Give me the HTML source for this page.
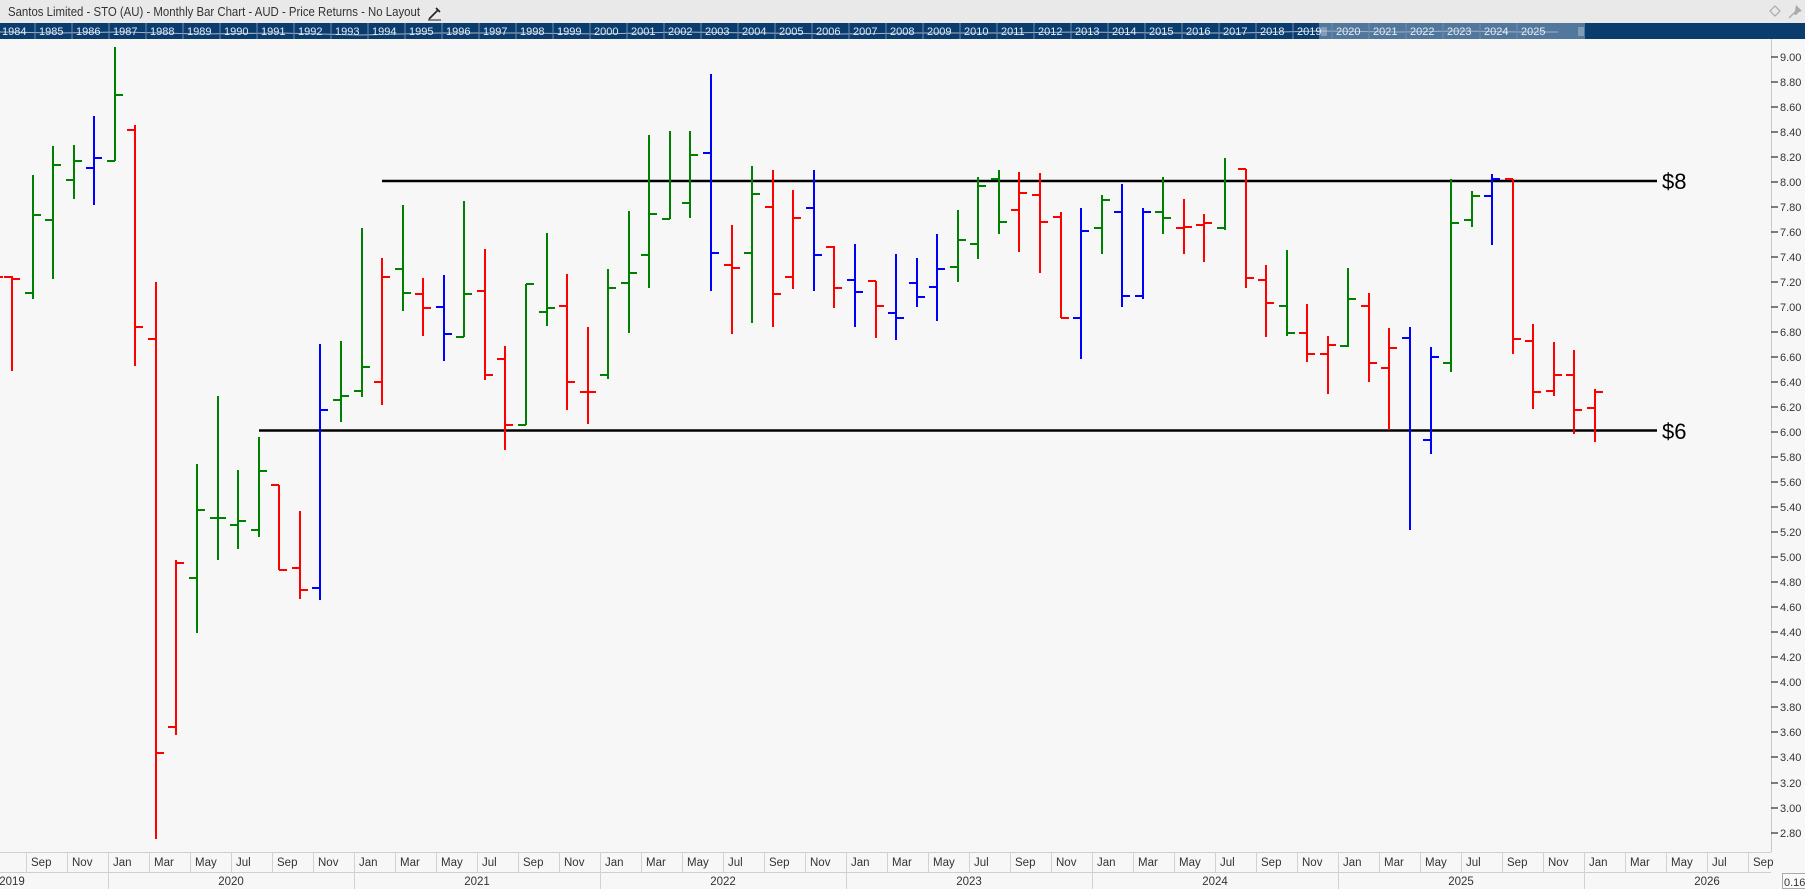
<!DOCTYPE html>
<html><head><meta charset="utf-8"><style>
html,body{margin:0;padding:0;background:#f7f7f7;overflow:hidden}
svg{display:block;font-family:"Liberation Sans",sans-serif}
</style></head><body>
<svg width="1805" height="889" viewBox="0 0 1805 889" xmlns="http://www.w3.org/2000/svg">
<rect x="0" y="0" width="1805" height="889" fill="#f7f7f7"/>
<rect x="0" y="0" width="1805" height="23" fill="#e9e9e9"/>
<text x="8" y="16" font-size="12.5" fill="#333" textLength="412" lengthAdjust="spacingAndGlyphs">Santos Limited - STO (AU) - Monthly Bar Chart - AUD - Price Returns - No Layout</text>
<g stroke="#222" stroke-width="1.6" fill="none"><path d="M430 18 L438 10 M436 8 L440 12 M429 19 L431 17"/><path d="M428 20 H441" stroke-width="1"/></g>
<path d="M1775 6 L1780 11 L1775 16 L1770 11 Z" fill="none" stroke="#aaa" stroke-width="1.2"/>
<g fill="#aaa"><path d="M1796 5 L1802 11 L1799 12 L1796 15 L1793 14 L1795 11 Z"/><path d="M1794 13 L1789 18" stroke="#aaa" stroke-width="1.3"/></g>
<rect x="0" y="23" width="1805" height="16" fill="#0b3c6e"/>
<rect x="1319" y="23" width="266" height="16" fill="#52779c"/>
<polyline points="0,32 60,33 120,32 200,34 280,33 360,35 440,33 520,33 600,34 680,32 760,33 840,34 920,33 1000,33 1080,32 1160,33 1240,33 1320,31 1400,32 1460,31 1520,32 1558,32" fill="none" stroke="#9fb3c8" stroke-width="1"/>
<g stroke="#3f6690" stroke-width="1">
<path d="M35 23V39M72 23V39M109 23V39M146 23V39M183 23V39M220 23V39M257 23V39M294 23V39M331 23V39M368 23V39M405 23V39M442 23V39M479 23V39M516 23V39M553 23V39M590 23V39M627 23V39M664 23V39M701 23V39M738 23V39M775 23V39M812 23V39M849 23V39M886 23V39M923 23V39M960 23V39M997 23V39M1034 23V39M1071 23V39M1108 23V39M1145 23V39M1182 23V39M1219 23V39M1256 23V39M1293 23V39M1332 23V39M1369 23V39M1406 23V39M1443 23V39M1480 23V39M1517 23V39" stroke="#6d8cb0"/>
</g>
<path d="M1322 27V36M1324 27V36M1326 27V36M1579 27V36M1581 27V36M1583 27V36" stroke="#c8d4e0" stroke-width="0.8"/>
<g font-size="11" fill="#e4ecf4">
<text x="2" y="35">1984</text><text x="39" y="35">1985</text><text x="76" y="35">1986</text><text x="113" y="35">1987</text><text x="150" y="35">1988</text><text x="187" y="35">1989</text><text x="224" y="35">1990</text><text x="261" y="35">1991</text><text x="298" y="35">1992</text><text x="335" y="35">1993</text><text x="372" y="35">1994</text><text x="409" y="35">1995</text><text x="446" y="35">1996</text><text x="483" y="35">1997</text><text x="520" y="35">1998</text><text x="557" y="35">1999</text><text x="594" y="35">2000</text><text x="631" y="35">2001</text><text x="668" y="35">2002</text><text x="705" y="35">2003</text><text x="742" y="35">2004</text><text x="779" y="35">2005</text><text x="816" y="35">2006</text><text x="853" y="35">2007</text><text x="890" y="35">2008</text><text x="927" y="35">2009</text><text x="964" y="35">2010</text><text x="1001" y="35">2011</text><text x="1038" y="35">2012</text><text x="1075" y="35">2013</text><text x="1112" y="35">2014</text><text x="1149" y="35">2015</text><text x="1186" y="35">2016</text><text x="1223" y="35">2017</text><text x="1260" y="35">2018</text><text x="1297" y="35">2019</text><text x="1336" y="35">2020</text><text x="1373" y="35">2021</text><text x="1410" y="35">2022</text><text x="1447" y="35">2023</text><text x="1484" y="35">2024</text><text x="1521" y="35">2025</text>
</g>

<!-- price axis -->
<path d="M1771.5 39V852" stroke="#c8c8c8" stroke-width="1"/>
<g stroke="#333" stroke-width="1.2">
<path d="M1771 57H1778M1771 82H1778M1771 107H1778M1771 132H1778M1771 157H1778M1771 182H1778M1771 207H1778M1771 232H1778M1771 257H1778M1771 282H1778M1771 307H1778M1771 332H1778M1771 357H1778M1771 382H1778M1771 407H1778M1771 432H1778M1771 457H1778M1771 482H1778M1771 507H1778M1771 532H1778M1771 557H1778M1771 582H1778M1771 607H1778M1771 632H1778M1771 657H1778M1771 682H1778M1771 707H1778M1771 732H1778M1771 757H1778M1771 783H1778M1771 808H1778M1771 833H1778"/>
</g>
<g font-size="11" fill="#333">
<text x="1780" y="61">9.00</text><text x="1780" y="86">8.80</text><text x="1780" y="111">8.60</text><text x="1780" y="136">8.40</text><text x="1780" y="161">8.20</text><text x="1780" y="186">8.00</text><text x="1780" y="211">7.80</text><text x="1780" y="236">7.60</text><text x="1780" y="261">7.40</text><text x="1780" y="286">7.20</text><text x="1780" y="311">7.00</text><text x="1780" y="336">6.80</text><text x="1780" y="361">6.60</text><text x="1780" y="386">6.40</text><text x="1780" y="411">6.20</text><text x="1780" y="436">6.00</text><text x="1780" y="461">5.80</text><text x="1780" y="486">5.60</text><text x="1780" y="511">5.40</text><text x="1780" y="536">5.20</text><text x="1780" y="561">5.00</text><text x="1780" y="586">4.80</text><text x="1780" y="611">4.60</text><text x="1780" y="636">4.40</text><text x="1780" y="661">4.20</text><text x="1780" y="686">4.00</text><text x="1780" y="711">3.80</text><text x="1780" y="736">3.60</text><text x="1780" y="761">3.40</text><text x="1780" y="787">3.20</text><text x="1780" y="812">3.00</text><text x="1780" y="837">2.80</text>
</g>

<!-- bottom axis -->
<path d="M0 852.5H1771M0 872.5H1771" stroke="#cfcfcf" stroke-width="1"/>
<g stroke="#d2d2d2" stroke-width="1">
<path d="M26.5 852V872M67.5 852V872M108.5 852V872M149.5 852V872M190.5 852V872M231.5 852V872M272.5 852V872M313.5 852V872M354.5 852V872M395.5 852V872M436.5 852V872M477.5 852V872M518.5 852V872M559.5 852V872M600.5 852V872M641.5 852V872M682.5 852V872M723.5 852V872M764.5 852V872M805.5 852V872M846.5 852V872M887.5 852V872M928.5 852V872M969.5 852V872M1010.5 852V872M1051.5 852V872M1092.5 852V872M1133.5 852V872M1174.5 852V872M1215.5 852V872M1256.5 852V872M1297.5 852V872M1338.5 852V872M1379.5 852V872M1420.5 852V872M1461.5 852V872M1502.5 852V872M1543.5 852V872M1584.5 852V872M1625.5 852V872M1666.5 852V872M1707.5 852V872M1748.5 852V872"/>
<path d="M108.5 872V889M354.5 872V889M600.5 872V889M846.5 872V889M1092.5 872V889M1338.5 872V889M1584.5 872V889"/>
</g>
<g font-size="11.5" fill="#333">
<text x="31" y="866">Sep</text><text x="72" y="866">Nov</text><text x="113" y="866">Jan</text><text x="154" y="866">Mar</text><text x="195" y="866">May</text><text x="236" y="866">Jul</text><text x="277" y="866">Sep</text><text x="318" y="866">Nov</text><text x="359" y="866">Jan</text><text x="400" y="866">Mar</text><text x="441" y="866">May</text><text x="482" y="866">Jul</text><text x="523" y="866">Sep</text><text x="564" y="866">Nov</text><text x="605" y="866">Jan</text><text x="646" y="866">Mar</text><text x="687" y="866">May</text><text x="728" y="866">Jul</text><text x="769" y="866">Sep</text><text x="810" y="866">Nov</text><text x="851" y="866">Jan</text><text x="892" y="866">Mar</text><text x="933" y="866">May</text><text x="974" y="866">Jul</text><text x="1015" y="866">Sep</text><text x="1056" y="866">Nov</text><text x="1097" y="866">Jan</text><text x="1138" y="866">Mar</text><text x="1179" y="866">May</text><text x="1220" y="866">Jul</text><text x="1261" y="866">Sep</text><text x="1302" y="866">Nov</text><text x="1343" y="866">Jan</text><text x="1384" y="866">Mar</text><text x="1425" y="866">May</text><text x="1466" y="866">Jul</text><text x="1507" y="866">Sep</text><text x="1548" y="866">Nov</text><text x="1589" y="866">Jan</text><text x="1630" y="866">Mar</text><text x="1671" y="866">May</text><text x="1712" y="866">Jul</text><text x="1753" y="866">Sep</text>
</g>
<g font-size="11.5" fill="#333" text-anchor="middle">
<text x="12" y="885">2019</text><text x="231" y="885">2020</text><text x="477" y="885">2021</text><text x="723" y="885">2022</text><text x="969" y="885">2023</text><text x="1215" y="885">2024</text><text x="1461" y="885">2025</text><text x="1707" y="885">2026</text>
</g>
<rect x="1782.5" y="873.5" width="23" height="15" fill="#fafafa" stroke="#aaa"/>
<text x="1784" y="886" font-size="11" fill="#333">0.16</text>

<!-- horizontal levels -->
<path d="M382 181H1657" stroke="#000" stroke-width="2.6"/>
<path d="M259 430.5H1657" stroke="#000" stroke-width="2.6"/>
<text x="1662" y="189" font-size="22" fill="#000">$8</text>
<text x="1662" y="439" font-size="22" fill="#000">$6</text>

<!-- bars -->
<g fill="none" stroke-width="2">
<path stroke="#ff0000" d="M0 277H3
M12 276V371M4 277H12M12 279H20
M135 125V366M127 130H135M135 327H143
M156 282V839M148 339H156M156 753H164
M176 560V735M168 727H176M176 563H184
M279 485V570M271 485H279M279 570H287
M300 511V599M292 568H300M300 590H308
M382 258V405M374 382H382M382 277H390
M423 278V336M415 294H423M423 308H431
M485 249V380M477 291H485M485 375H493
M505 346V450M497 359H505M505 425H513
M567 274V410M559 306H567M567 382H575
M588 327V424M580 392H588M588 392H596
M732 225V334M724 265H732M732 268H740
M773 170V327M765 207H773M773 294H781
M793 190V289M785 277H793M793 218H801
M834 246V308M826 247H834M834 288H842
M876 281V338M868 281H876M876 306H884
M1019 172V252M1011 210H1019M1019 193H1027
M1040 173V273M1032 195H1040M1040 222H1048
M1061 212V318M1053 217H1061M1061 318H1069
M1184 199V254M1176 228H1184M1184 227H1192
M1204 214V262M1196 225H1204M1204 223H1212
M1246 169V288M1238 169H1246M1246 278H1254
M1266 265V337M1258 280H1266M1266 303H1274
M1307 304V362M1299 333H1307M1307 354H1315
M1328 336V394M1320 354H1328M1328 345H1336
M1369 293V382M1361 306H1369M1369 363H1377
M1389 328V430M1381 368H1389M1389 348H1397
M1513 179V354M1505 179H1513M1513 339H1521
M1533 324V409M1525 341H1533M1533 392H1541
M1554 342V396M1546 391H1554M1554 375H1562
M1574 350V434M1566 375H1574M1574 410H1582
M1595 389V442M1587 408H1595M1595 392H1603"/>
<path stroke="#008000" d="M33 175V299M25 293H33M33 215H41
M53 146V279M45 220H53M53 165H61
M74 145V199M66 180H74M74 161H82
M115 47V161M107 161H115M115 95H123
M197 464V633M189 578H197M197 510H205
M218 396V560M210 518H218M218 518H226
M238 470V549M230 525H238M238 521H246
M259 437V537M251 530H259M259 471H267
M341 341V422M333 400H341M341 396H349
M362 228V397M354 391H362M362 367H370
M403 205V311M395 269H403M403 293H411
M464 201V337M456 337H464M464 294H472
M526 284V425M518 425H526M526 284H534
M547 233V326M539 312H547M547 308H555
M608 269V379M600 375H608M608 288H616
M629 211V333M621 283H629M629 273H637
M649 135V288M641 255H649M649 214H657
M670 131V219M662 219H670
M690 131V218M682 203H690M690 155H698
M752 166V323M744 253H752M752 194H760
M958 210V282M950 267H958M958 240H966
M978 177V259M970 244H978M978 186H986
M999 170V234M991 179H999M999 222H1007
M1102 195V254M1094 228H1102M1102 200H1110
M1163 177V234M1155 212H1163M1163 218H1171
M1225 158V230M1217 228H1225
M1287 250V336M1279 306H1287M1287 333H1295
M1348 268V347M1340 346H1348M1348 299H1356
M1451 179V372M1443 363H1451M1451 223H1459
M1472 191V227M1464 220H1472M1472 196H1480"/>
<path stroke="#0000ff" d="M94 116V205M86 168H94M94 158H102
M320 344V600M312 588H320M320 410H328
M444 275V361M436 307H444M444 334H452
M711 74V291M703 153H711M711 253H719
M814 170V291M806 208H814M814 255H822
M855 244V327M847 280H855M855 292H863
M896 254V340M888 313H896M896 318H904
M917 258V307M909 283H917M917 297H925
M937 234V321M929 287H937M937 269H945
M1081 208V359M1073 318H1081M1081 231H1089
M1122 184V307M1114 212H1122M1122 296H1130
M1143 208V299M1135 296H1143M1143 212H1151
M1410 327V530M1402 338H1410
M1431 347V454M1423 440H1431M1431 357H1439
M1492 174V245M1484 196H1492M1492 179H1500"/>
</g>
</svg>
</body></html>
